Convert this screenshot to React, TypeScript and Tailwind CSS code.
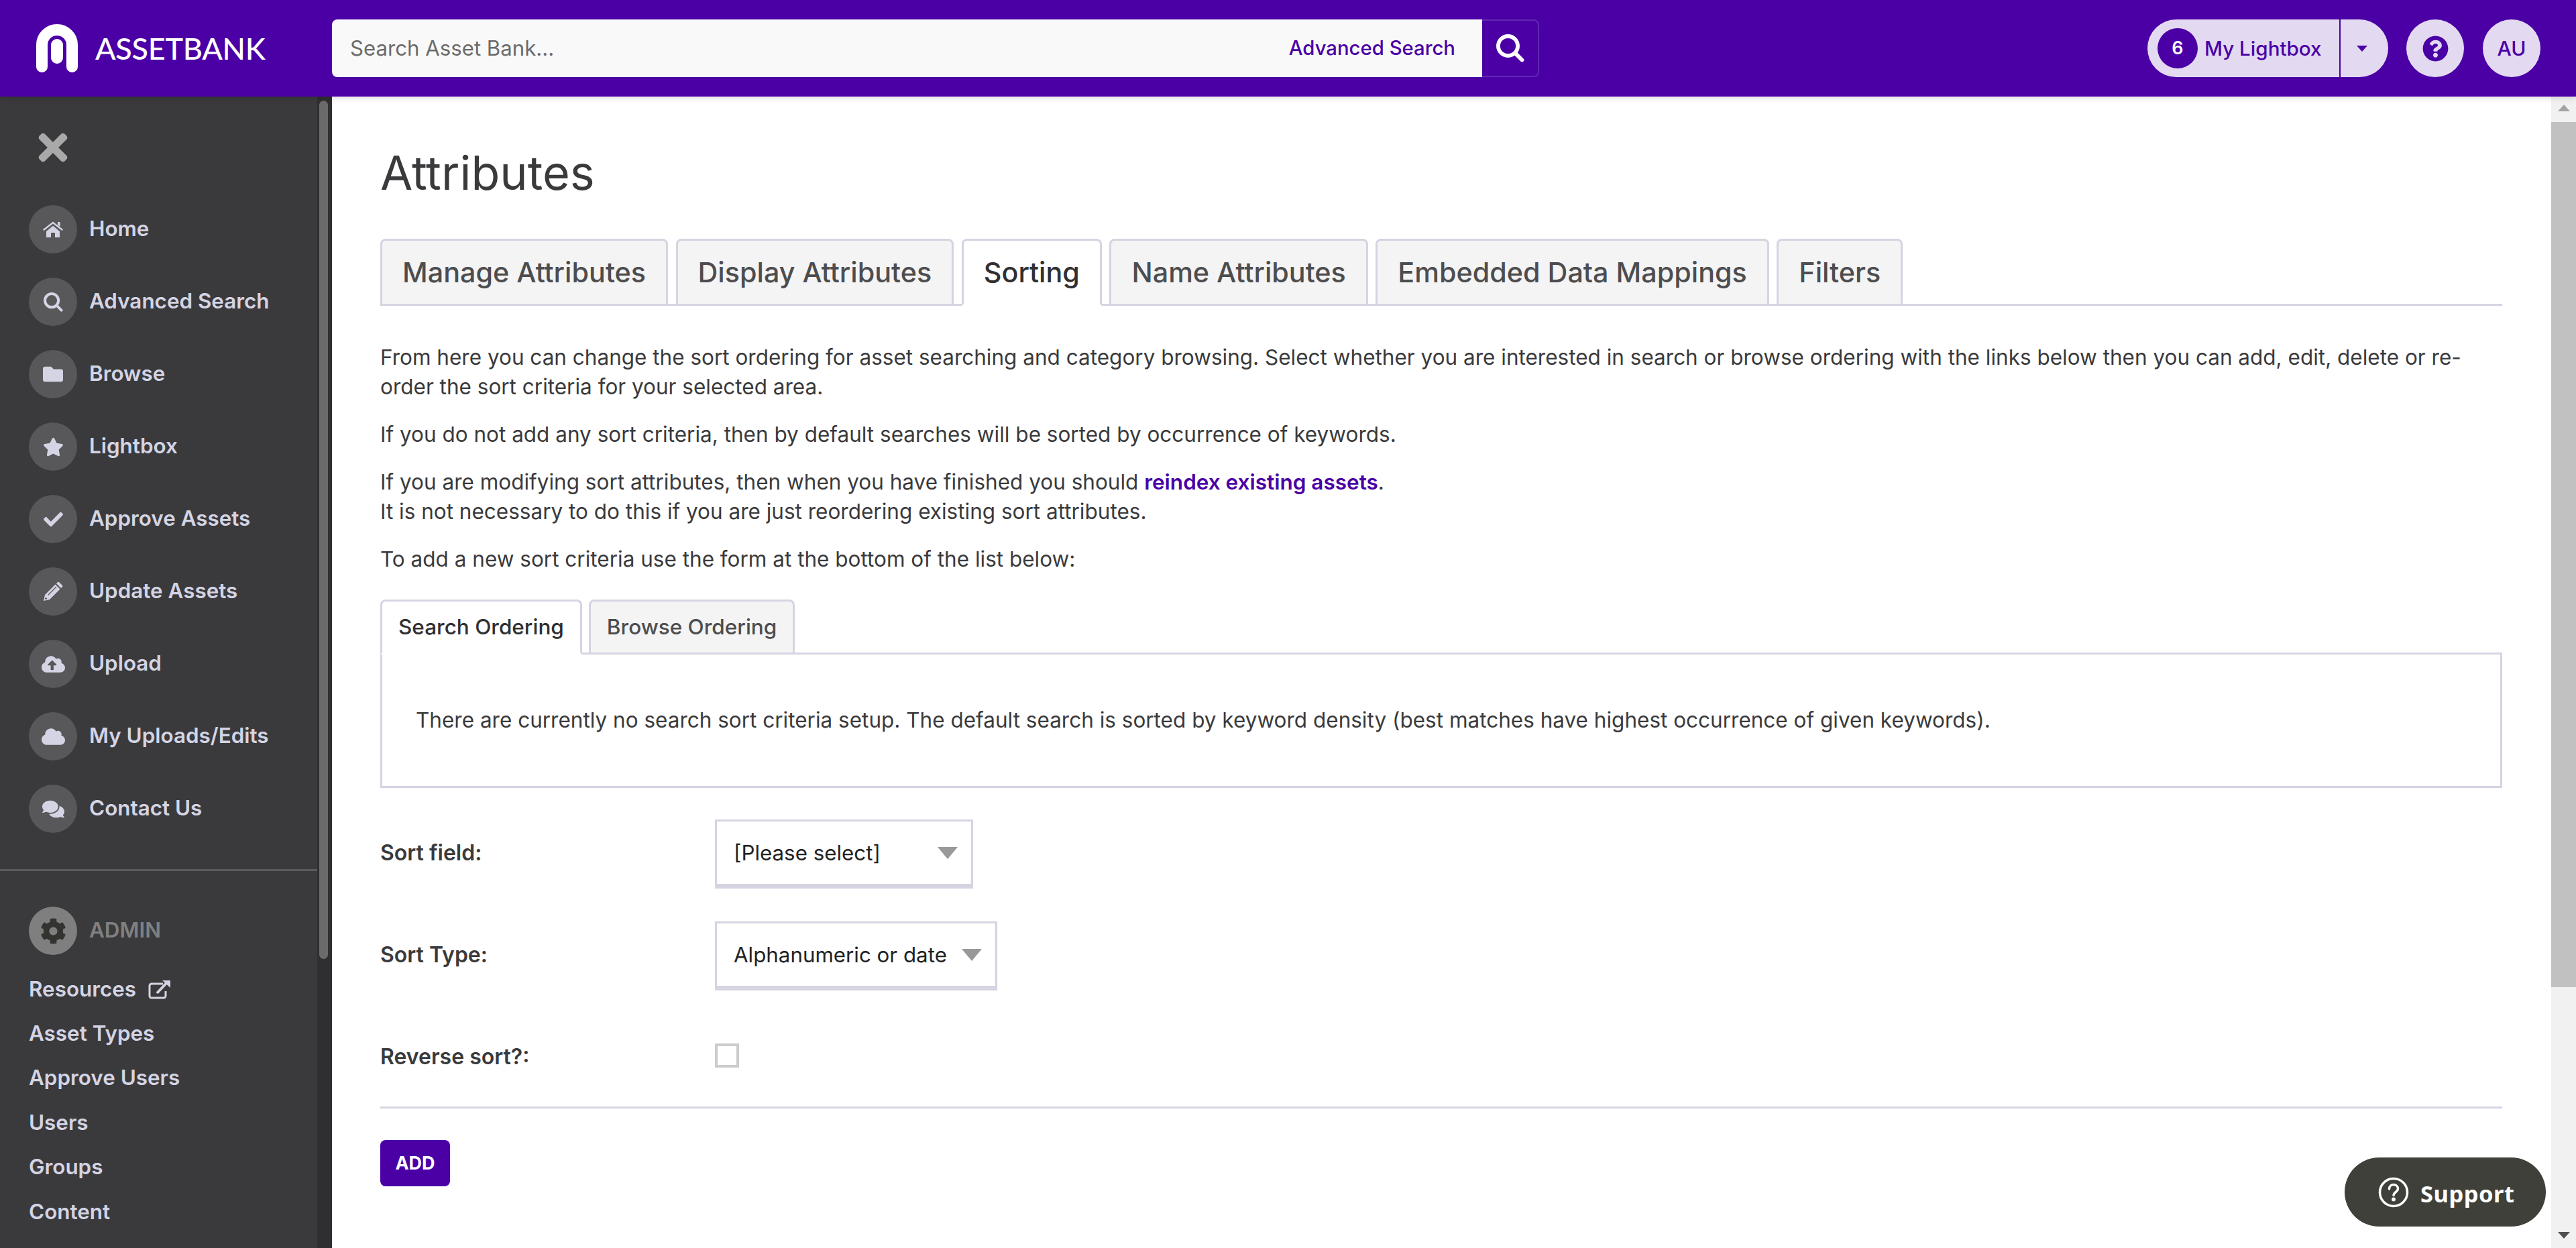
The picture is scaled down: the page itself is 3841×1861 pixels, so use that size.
import { FaCheck, FaCloud, FaCloudUploadAlt, FaCog, FaComments, FaFolder, FaQuestionCircle, FaStar, FaTimes } from "react-icons/fa";

const SearchIcon = ({ size }: { size: number }) => (
  <svg width={size} height={size} viewBox="0 0 30 30" fill="none" stroke="currentColor" strokeWidth="4.200">
    <circle cx="12.500" cy="12.500" r="10.400" />
    <path d="M20.500 20.500L27.500 27.500" strokeLinecap="round" />
  </svg>
);

const HomeIcon = () => (
  <svg width="30" height="24" viewBox="0 0 30 24" fill="currentColor">
    <path d="M1.500 12.500L15 2l13.500 10.500" fill="none" stroke="currentColor" strokeWidth="2.400" strokeLinecap="round" />
    <path d="M22 1h3.500v7L22 5.500z" />
    <path d="M5 15L15 6.800 25 15v9h-7v-7h-6v7H5z" />
  </svg>
);

const PencilIcon = () => (
  <svg width="30" height="30" viewBox="0 0 30 30" fill="currentColor">
    <path d="M1 29l2-9L18.500 4.500l7 7L10 27z" />
    <path d="M20 3l1.500-1.500a2 2 0 0 1 3 0l4 4a2 2 0 0 1 0 3L27 10z" />
    <path d="M7.500 20.500L20 8" stroke="#58585a" strokeWidth="1.200" />
    <path d="M3.500 24.500l2 2" stroke="#58585a" strokeWidth="2.400" />
  </svg>
);

const navItems = [
  { label: "Home", icon: <HomeIcon /> },
  { label: "Advanced Search", icon: <SearchIcon size={29} /> },
  { label: "Browse", icon: <FaFolder className="text-[30px]" /> },
  { label: "Lightbox", icon: <FaStar className="text-[31px]" /> },
  { label: "Approve Assets", icon: <FaCheck className="text-[29px]" /> },
  { label: "Update Assets", icon: <PencilIcon /> },
  { label: "Upload", icon: <FaCloudUploadAlt className="text-[35px]" /> },
  { label: "My Uploads/Edits", icon: <FaCloud className="text-[35px]" /> },
  { label: "Contact Us", icon: <FaComments className="text-[33px]" /> },
];

const adminLinks = ["Asset Types", "Approve Users", "Users", "Groups", "Content"];

const mainTabs = [
  { label: "Manage Attributes" },
  { label: "Display Attributes" },
  { label: "Sorting", active: true },
  { label: "Name Attributes" },
  { label: "Embedded Data Mappings" },
  { label: "Filters" },
];

const Logo = () => (
  <svg width="62" height="72" viewBox="0 0 62 72" className="shrink-0">
    <path
      d="M8.500 63.500V31a22.500 22.500 0 0 1 45 0v32.500"
      fill="none"
      stroke="#fff"
      strokeWidth="17"
      strokeLinecap="round"
    />
    <rect x="22" y="22" width="18" height="37" rx="9" fill="#fff" />
  </svg>
);

const Header = () => (
  <header className="relative z-10 flex h-[144px] shrink-0 items-center bg-[#4b00a6] shadow-[0_3px_8px_rgba(0,0,0,0.12)]">
    <div className="flex w-[495px] shrink-0 items-center pl-[54px]">
      <Logo />
      <span className="ml-[26px] font-['Lato',sans-serif] text-[45px] leading-none font-medium tracking-[-0.3px] text-white">
        ASSETBANK
      </span>
    </div>
    <div className="flex h-[86px] w-[1800px] items-stretch">
      <div className="flex w-[1715px] items-center justify-between rounded-l-[8px] bg-[#f9f9f9] pr-[40px] pl-[27px]">
        <span className="text-[31.2px] text-[#6b6b6b]">Search Asset Bank...</span>
        <span className="text-[29.3px] font-medium text-[#4b00a6]">Advanced Search</span>
      </div>
      <div className="flex w-[85px] items-center justify-center rounded-r-[8px] border-2 border-l-0 border-[#5f2ab0] text-white">
        <SearchIcon size={42} />
      </div>
    </div>
    <div className="ml-auto flex items-center pr-[53px]">
      <div className="flex h-[86px] w-[359px] items-stretch rounded-full bg-[#e3daf2] text-[#4b00a6]">
        <div className="flex w-[288px] items-center border-r-2 border-[#4b00a6] pl-[15px]">
          <span className="flex h-[60px] w-[60px] items-center justify-center rounded-full bg-[#4b00a6] text-[27px] font-semibold text-white">
            6
          </span>
          <span className="ml-[10px] text-[29.6px] font-medium">My Lightbox</span>
        </div>
        <div className="flex flex-1 items-center justify-center pr-[8px]">
          <span className="h-0 w-0 border-x-[8px] border-t-[9px] border-x-transparent border-t-[#4b00a6]" />
        </div>
      </div>
      <div className="ml-[27px] flex h-[86px] w-[86px] items-center justify-center rounded-full bg-[#e3daf2] text-[#4b00a6]">
        <FaQuestionCircle className="text-[39px]" />
      </div>
      <div className="ml-[28px] flex h-[86px] w-[86px] items-center justify-center rounded-full bg-[#e3daf2] text-[30px] font-medium text-[#4b00a6]">
        AU
      </div>
    </div>
  </header>
);

const Sidebar = () => (
  <aside className="relative flex w-[495px] shrink-0 overflow-hidden bg-[#3a3a3c]">
    <div className="w-[473px] shrink-0 text-[31.4px] font-semibold text-[#d4d4e4]">
      <div className="flex h-[144px] items-start pt-[45px] pl-[48px] text-[#a9a9a9]">
        <FaTimes className="text-[62px]" />
      </div>
      {navItems.map((item) => (
        <div key={item.label} className="flex h-[108px] items-center pl-[43px]">
          <span className="flex h-[72px] w-[72px] shrink-0 items-center justify-center rounded-full bg-[#58585a]">
            {item.icon}
          </span>
          <span className="ml-[18px]">{item.label}</span>
        </div>
      ))}
      <div className="mt-[36px] border-t-[3px] border-[#5c5c5e]" />
      <div className="mt-[53px] flex items-center pl-[43px] text-[#808080]">
        <span className="flex h-[72px] w-[72px] items-center justify-center rounded-full bg-[#7f7f7f] text-[#333330]">
          <FaCog className="text-[39px]" />
        </span>
        <span className="ml-[18px]">ADMIN</span>
      </div>
      <div className="mt-[18px] pl-[43px]">
        <div className="flex h-[66.4px] items-center gap-[18px]">
          Resources
          <svg width="34" height="30" viewBox="0 0 34 30" fill="none" stroke="#d4d4e4" strokeWidth="3">
            <path d="M22 7H5a3 3 0 0 0-3 3v15a3 3 0 0 0 3 3h18a3 3 0 0 0 3-3v-7" />
            <path d="M13 21L29 4" strokeWidth="4" />
            <path d="M21 2h12v11z" fill="#d4d4e4" stroke="none" />
          </svg>
        </div>
        {adminLinks.map((link) => (
          <div key={link} className="flex h-[66.4px] items-center">
            {link}
          </div>
        ))}
      </div>
    </div>
    <div className="flex-1 bg-[#2f2f31] pt-[6px] pl-[3px]">
      <div className="h-[1280px] w-[13px] rounded-full bg-[#6b6b6b]" />
    </div>
  </aside>
);

const MainTab = ({ label, active }: { label: string; active?: boolean }) => (
  <div
    className={
      "-mb-[3px] flex h-[100px] items-center rounded-t-[8px] border-[3px] px-[30px] text-[41.3px] font-medium " +
      (active
        ? "border-[#d4d4e2] border-b-white bg-white text-[#303032]"
        : "border-[#d4d4e2] bg-[#f4f4f4] text-[#4d4d4f]")
    }
  >
    {label}
  </div>
);

const SelectBox = ({ label, width }: { label: string; width: string }) => (
  <div
    className={
      "flex h-[103px] items-center justify-between border-[3px] border-b-[7px] border-[#d4d4e2] pr-[20px] pl-[25px] text-[31.3px] text-[#222] " +
      width
    }
  >
    {label}
    <span className="h-0 w-0 border-x-[15px] border-t-[18px] border-x-transparent border-t-[#999]" />
  </div>
);

const FormRow = ({ label, className, children }: { label: string; className: string; children: React.ReactNode }) => (
  <div className={"flex items-center " + className}>
    <div className="w-[499px] pb-[4px] text-[32px] font-semibold text-[#3a3a3c]">{label}</div>
    {children}
  </div>
);

const Main = () => (
  <main className="flex-1 overflow-hidden bg-white pt-[72px] pr-[73px] pl-[72px] text-[31.5px] leading-[44px] text-[#3a3a3c]">
    <h1 className="text-[70px] leading-[84px] font-normal">Attributes</h1>
    <div className="mt-[56px] flex gap-[11.5px] border-b-[3px] border-[#d4d4e2]">
      {mainTabs.map((tab) => (
        <MainTab key={tab.label} label={tab.label} active={tab.active} />
      ))}
    </div>
    <p className="mt-[55px]">
      From here you can change the sort ordering for asset searching and category browsing. Select whether you are
      interested in search or browse ordering with the links below then you can add, edit, delete or re-order the sort
      criteria for your selected area.
    </p>
    <p className="mt-[27px]">If you do not add any sort criteria, then by default searches will be sorted by occurrence of keywords.</p>
    <p className="mt-[27px]">
      If you are modifying sort attributes, then when you have finished you should{" "}
      <span className="font-semibold text-[#4b00a6]">reindex existing assets</span>.
      <br />
      It is not necessary to do this if you are just reordering existing sort attributes.
    </p>
    <p className="mt-[27px]">To add a new sort criteria use the form at the bottom of the list below:</p>
    <div className="mt-[38px] flex gap-[10px] font-medium">
      <div className="relative z-[1] -mb-[3px] flex h-[82px] items-center rounded-t-[8px] border-[3px] border-[#d4d4e2] border-b-white bg-white px-[24px] text-[#303032]">
        Search Ordering
      </div>
      <div className="flex h-[79px] items-center rounded-t-[8px] border-[3px] border-b-0 border-[#d4d4e2] bg-[#f4f4f4] px-[24px] text-[#4d4d4f]">
        Browse Ordering
      </div>
    </div>
    <div className="flex h-[202px] items-center border-[3px] border-[#d4d4e2] pl-[50px]">
      There are currently no search sort criteria setup. The default search is sorted by keyword density (best matches have
      highest occurrence of given keywords).
    </div>
    <FormRow label="Sort field:" className="mt-[47px]">
      <SelectBox label="[Please select]" width="w-[385px]" />
    </FormRow>
    <FormRow label="Sort Type:" className="mt-[49px]">
      <SelectBox label="Alphanumeric or date" width="w-[421px]" />
    </FormRow>
    <FormRow label="Reverse sort?:" className="mt-[77px]">
      <span className="mb-[8px] h-[36px] w-[36px] border-[4px] border-[#cccccc] bg-white" />
    </FormRow>
    <div className="mt-[48px] border-t-[3px] border-[#d4d4e2]" />
    <button className="mt-[47px] flex h-[69px] w-[104px] items-center justify-center rounded-[8px] bg-[#4b00a6] text-[27px] font-bold text-white">
      ADD
    </button>
  </main>
);

const PageScrollbar = () => (
  <div className="flex w-[37px] shrink-0 flex-col items-center bg-[#f1f1f1]">
    <div className="mt-[12px] h-0 w-0 border-x-[9px] border-b-[10px] border-x-transparent border-b-[#a3a3a3]" />
    <div className="mt-[16px] h-[1290px] w-full bg-[#c1c1c1]" />
    <div className="mt-auto mb-[14px] h-0 w-0 border-x-[9px] border-t-[10px] border-x-transparent border-t-[#505050]" />
  </div>
);

export default function App() {
  return (
    <div className="relative flex h-[1861px] flex-col overflow-hidden font-['Inter',sans-serif]">
      <Header />
      <div className="flex min-h-0 flex-1">
        <Sidebar />
        <Main />
        <PageScrollbar />
      </div>
      <div className="absolute top-[1726px] left-[3496px] flex h-[103px] w-[300px] items-center rounded-full bg-[#3f4039] pl-[50px] font-['Noto_Sans',sans-serif] text-[34.5px] font-bold tracking-[0.5px] text-white">
        <svg width="46" height="46" viewBox="0 0 46 46" fill="none" stroke="#fff" strokeWidth="3.500">
          <circle cx="23" cy="23" r="20.500" />
          <path d="M16.500 18c0-4 3-6.500 6.500-6.500s6.500 2.500 6.500 6c0 5-6.500 5-6.500 10" strokeLinecap="round" />
          <circle cx="23" cy="33.500" r="1.200" fill="#fff" />
        </svg>
        <span className="mt-[4px] ml-[17px]">Support</span>
      </div>
    </div>
  );
}
